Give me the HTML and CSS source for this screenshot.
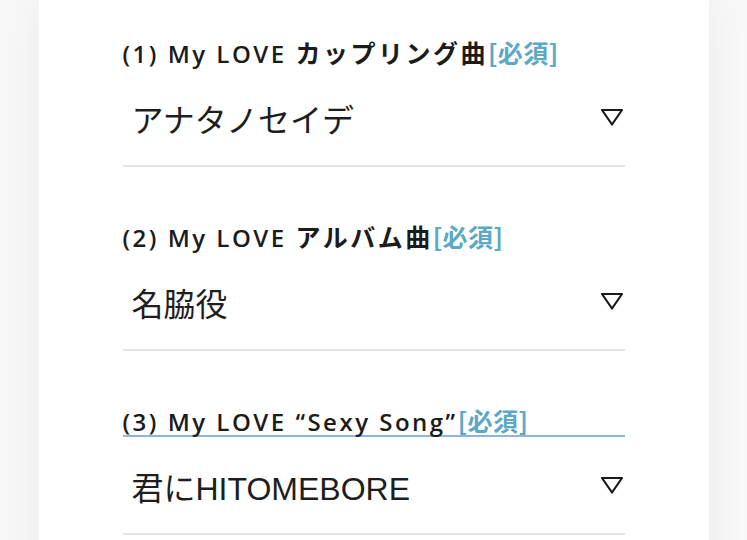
FILE: index.html
```html
<!DOCTYPE html>
<html lang="ja">
<head>
<meta charset="utf-8">
<link rel="stylesheet" href="styles.css">
</head>
<body>
<div class="page">
  <form class="card">
    <div class="field">
      <div class="label">(1) My LOVE <span class="jp">カップリング曲</span><span class="req">[必須]</span></div>
      <div class="select">
        <span class="value">アナタノセイデ</span>
        <svg class="arrow" width="24" height="18" viewBox="0 0 24 18"><path d="M2 2 H22 L12 16.5 Z" fill="none" stroke="#1a1a1a" stroke-width="2.2" stroke-linejoin="round"/></svg>
      </div>
    </div>
    <div class="field">
      <div class="label">(2) My LOVE <span class="jp">アルバム曲</span><span class="req">[必須]</span></div>
      <div class="select">
        <span class="value">名脇役</span>
        <svg class="arrow" width="24" height="18" viewBox="0 0 24 18"><path d="M2 2 H22 L12 16.5 Z" fill="none" stroke="#1a1a1a" stroke-width="2.2" stroke-linejoin="round"/></svg>
      </div>
    </div>
    <div class="field">
      <div class="label active">(3) My LOVE “Sexy Song”<span class="req">[必須]</span></div>
      <div class="select">
        <span class="value">君にHITOMEBORE</span>
        <svg class="arrow" width="24" height="18" viewBox="0 0 24 18"><path d="M2 2 H22 L12 16.5 Z" fill="none" stroke="#1a1a1a" stroke-width="2.2" stroke-linejoin="round"/></svg>
      </div>
    </div>
  </form>
</div>
</body>
</html>
```

FILE: styles.css
```css
html, body {
  margin: 0;
  padding: 0;
  background: #f8f8f8;
  height: 100%;
  overflow: hidden;
}
.page {
  display: flex;
  justify-content: center;
}
.card {
  width: 502px;
  padding: 37px 84px 0;
  background: #fff;
  box-shadow: 0 0 40px rgba(0, 0, 0, 0.06);
  min-height: 600px;
  margin: 0;
}
.field {
  margin-bottom: 54px;
}
.label {
  font-family: "Open Sans", "Noto Sans CJK JP", sans-serif;
  font-weight: 600;
  font-size: 24px;
  height: 30px;
  line-height: 30px;
  color: #1c1c1c;
  letter-spacing: 2.5px;
  white-space: nowrap;
  overflow: visible;
}
.label .jp {
  font-family: "Noto Sans CJK JP", sans-serif;
  font-weight: 700;
  font-size: 25px;
  letter-spacing: 2.5px;
}
.label .req {
  font-family: "Noto Sans CJK JP", sans-serif;
  font-weight: 700;
  font-size: 25px;
  color: #5ba9c5;
  letter-spacing: 0.5px;
}
.label.active {
  height: 30px;
  border-bottom: 2px solid #8fb6d9;
  margin-bottom: -2px;
}
.select {
  margin-top: 8px;
  box-sizing: border-box;
  border-bottom: 2px solid #e3e3e3;
  display: flex;
  align-items: center;
  justify-content: space-between;
  padding: 0 1px 5px 9px;
  height: 92px;
}
.value {
  font-family: "Liberation Sans", "Noto Sans CJK JP", sans-serif;
  font-size: 32px;
  color: #1e1e1e;
  font-weight: 400;
}
.arrow {
  display: block;
  margin-top: -2px;
}
```
